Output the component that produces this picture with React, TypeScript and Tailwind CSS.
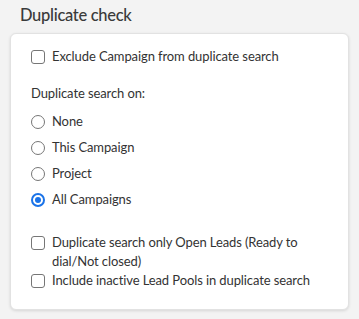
import React from 'react';

const Box = () => (
  <span className="mt-[3px] h-[14px] w-[14px] shrink-0 rounded-[3px] border border-[#767676] bg-white" />
);

const Radio = ({ on }: { on?: boolean }) =>
  on ? (
    <span className="flex h-[14px] w-[14px] shrink-0 items-center justify-center rounded-full border-2 border-[#1a73e8] bg-white">
      <span className="h-[6px] w-[6px] rounded-full bg-[#1a73e8]" />
    </span>
  ) : (
    <span className="h-[14px] w-[14px] shrink-0 rounded-full border border-[#767676] bg-white" />
  );

const OPTIONS = ['None', 'This Campaign', 'Project', 'All Campaigns'];

export default function App() {
  return (
    <div className="min-h-[319px] bg-[#f3f3f3] px-[10px] pt-[4px] text-[#333] [font-family:Lato,'Noto_Sans',sans-serif]">
      <h2 className="pl-[10px] text-[16.5px] leading-[22px] font-medium tracking-[-0.3px] text-[#3a3a3a]">Duplicate check</h2>
      <div className="mt-[7px] rounded-[6px] border border-[#e2e2e2] bg-white pb-[19px] pl-[20px] pr-3 pt-[13px] text-[13px] leading-[19px] tracking-[-0.1px] shadow-[0_1px_3px_rgba(0,0,0,0.12)]">
        <label className="flex gap-[7px]">
          <Box />
          <span>Exclude Campaign from duplicate search</span>
        </label>
        <div className="mt-[18px]">Duplicate search on:</div>
        <div className="mt-[9px] flex flex-col gap-[7px]">
          {OPTIONS.map((o) => (
            <label key={o} className="flex items-center gap-[7px]">
              <Radio on={o === 'All Campaigns'} />
              <span>{o}</span>
            </label>
          ))}
        </div>
        <label className="mt-[24px] flex gap-[7px]">
          <Box />
          <span>Duplicate search only Open Leads (Ready to dial/Not closed)</span>
        </label>
        <label className="flex gap-[7px]">
          <Box />
          <span>Include inactive Lead Pools in duplicate search</span>
        </label>
      </div>
    </div>
  );
}
